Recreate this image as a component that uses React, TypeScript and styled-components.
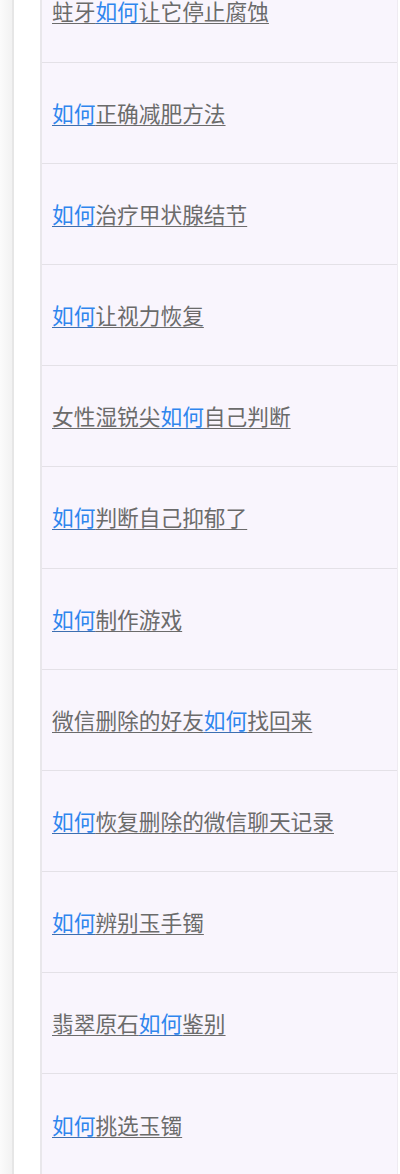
import React from "react";
import styled, { createGlobalStyle } from "styled-components";

const Global = createGlobalStyle`
  html, body { margin: 0; padding: 0; background: #ffffff; }
  body { font-family: "Noto Sans CJK SC", "Noto Sans", sans-serif; overflow: hidden; }
`;

const Page = styled.div`
  display: flex;
  align-items: stretch;
  width: 400px;
  min-height: 1174px;
  background: #ffffff;
`;

const Gutter = styled.div`
  width: 12px;
  flex: none;
  background: linear-gradient(to right, #fbfbfb, #f2f2f2);
  border-right: 2px solid #e6e6e6;
`;

const Spacer = styled.div`
  width: 26px;
  flex: none;
  background: #ffffff;
`;

const Panel = styled.ul`
  flex: 1;
  list-style: none;
  margin: -38.6px 2px 4px 0;
  padding: 0;
  background: #f9f5fd;
  border-left: 2px solid #e9e7eb;
  border-right: 1px solid #efebf2;
  align-self: flex-start;
`;

const Row = styled.li`
  display: flex;
  align-items: center;
  height: 100.2px;
  padding: 0 10px;
  border-bottom: 1px solid #e4e1e7;
  &:last-child { border-bottom: none; }
`;

const Link = styled.a`
  font-size: 21.7px;
  line-height: 1.2;
  color: #6b6b6b;
  text-decoration: underline;
  text-decoration-thickness: 1px;
  text-underline-offset: 3px;
  white-space: nowrap;
`;

const Hi = styled.span<{ $c?: string }>`
  color: ${(p) => p.$c ?? "#2f86ee"};
  text-decoration: underline;
  text-decoration-color: #3d6fb0;
  text-decoration-thickness: 1px;
  text-underline-offset: 3px;
`;

const items = [
  "蛀牙如何让它停止腐蚀",
  "如何正确减肥方法",
  "如何治疗甲状腺结节",
  "如何让视力恢复",
  "女性湿锐尖如何自己判断",
  "如何判断自己抑郁了",
  "如何制作游戏",
  "微信删除的好友如何找回来",
  "如何恢复删除的微信聊天记录",
  "如何辨别玉手镯",
  "翡翠原石如何鉴别",
  "如何挑选玉镯",
];

function render(text: string) {
  const parts = text.split("如何");
  const out: React.ReactNode[] = [];
  parts.forEach((p, i) => {
    if (i > 0) out.push(<Hi key={"h" + i}>如何</Hi>);
    if (p) out.push(<React.Fragment key={"t" + i}>{p}</React.Fragment>);
  });
  return out;
}

export default function App() {
  return (
    <>
      <Global />
      <Page>
        <Gutter />
        <Spacer />
        <Panel>
          {items.map((t) => (
            <Row key={t}>
              <Link href="#">{render(t)}</Link>
            </Row>
          ))}
        </Panel>
      </Page>
    </>
  );
}
